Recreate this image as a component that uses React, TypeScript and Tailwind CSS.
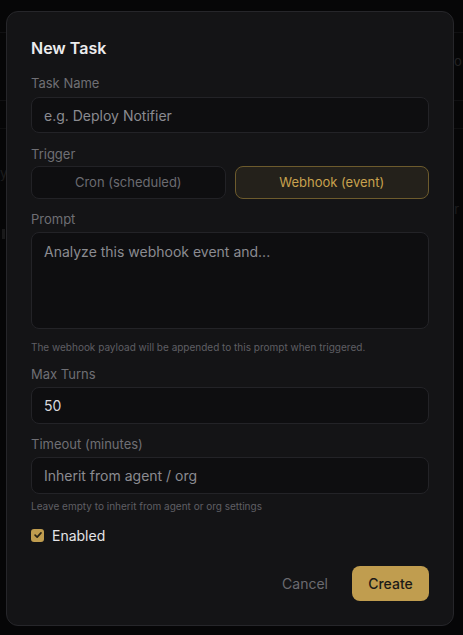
import React from 'react';

const font = { fontFamily: 'Inter, "Noto Sans", sans-serif' };

const Label: React.FC<{ children: React.ReactNode; className?: string }> = ({ children, className = '' }) => (
  <div className={`text-[13px] leading-4 text-[#6f6f74] ${className}`}>{children}</div>
);

const inputCls =
  'w-full rounded-lg border border-[#232327] bg-[#0e0e10] px-3 text-[14px] text-[#d8d8dc] placeholder:text-[#8b8b91] outline-none';

export default function App() {
  return (
    <div className="relative min-h-screen overflow-hidden bg-[#0b0b0c]" style={font}>
      {/* page behind the dialog */}
      <div className="pt-[32px] text-[13px] text-[#3a3a3d]">
        <div className="border-t border-[#1c1c1e]">
          <div className="flex h-[67px] items-start whitespace-nowrap pl-[447px] pt-[19px]">vo</div>
        </div>
        <div className="flex h-[28px] items-center border-t border-[#1c1c1e]" />
        <div className="border-t border-[#1a1a1c]">
          <div className="flex h-[54px] items-end whitespace-nowrap pl-0 text-[#2f2f32]">y</div>
          <div className="flex h-[36px] items-end whitespace-nowrap pl-[447px] text-[#2f2f32]">ar</div>
          <div className="flex h-[30px] items-center pl-[2px]">
            <span className="h-[10px] w-[3px] bg-[#2a2a2c]" />
          </div>
        </div>
      </div>

      {/* overlay + dialog */}
      <div className="fixed inset-0 flex items-start justify-start bg-black/40 pl-[6px] pt-[11px]">
        <div className="flex w-[448px] flex-col rounded-xl border border-[#26262a] bg-[#141416] p-6">
          <h2 className="text-[16px] font-semibold leading-6 text-[#ececee]">New Task</h2>

          <Label className="mt-[15px]">Task Name</Label>
          <input className={`${inputCls} mt-[6px] h-9`} placeholder="e.g. Deploy Notifier" />

          <Label className="mt-[13px]">Trigger</Label>
          <div className="mt-[4px] grid grid-cols-2 gap-[9px]">
            <button className="h-[33px] rounded-lg border border-[#222226] bg-[#0e0e10] text-[13px] text-[#6b6b70]">
              Cron (scheduled)
            </button>
            <button className="h-[33px] rounded-lg border border-[#6d5b2d] bg-[#24211b] text-[13px] text-[#c8a24e]">
              Webhook (event)
            </button>
          </div>

          <Label className="mt-[12px]">Prompt</Label>
          <textarea
            className={`${inputCls} mt-[5px] h-[97px] resize-none py-[9px] leading-5`}
            placeholder="Analyze this webhook event and..."
          />
          <div className="mt-[10px] text-[10px] leading-4 text-[#5f5f64]">
            The webhook payload will be appended to this prompt when triggered.
          </div>

          <Label className="mt-[11px]">Max Turns</Label>
          <input className={`${inputCls} mt-[5px] h-[37px]`} defaultValue="50" />

          <Label className="mt-[12px]">Timeout (minutes)</Label>
          <input className={`${inputCls} mt-[5px] h-[37px]`} placeholder="Inherit from agent / org" />
          <div className="mt-[4px] text-[10px] leading-4 text-[#5f5f64]">
            Leave empty to inherit from agent or org settings
          </div>

          <label className="mt-[11px] flex h-5 items-center gap-[8px]">
            <span className="flex h-[13px] w-[13px] items-center justify-center rounded-[3px] bg-[#c09d4f]">
              <svg viewBox="0 0 12 12" className="h-[10px] w-[10px]" fill="none" stroke="#2a2416" strokeWidth="2" strokeLinecap="round" strokeLinejoin="round">
                <path d="M2.5 6.2 5 8.6 9.6 3.4" />
              </svg>
            </span>
            <span className="text-[14px] text-[#e4e4e7]">Enabled</span>
          </label>

          <div className="mt-[21px] flex items-center justify-end gap-[8px]">
            <button className="h-[35px] px-4 text-[14px] text-[#6b6b70]">Cancel</button>
            <button className="h-[35px] w-[77px] rounded-lg bg-[#c09d4f] text-[14px] font-medium text-[#1b1a17]">
              Create
            </button>
          </div>
        </div>
      </div>
    </div>
  );
}
